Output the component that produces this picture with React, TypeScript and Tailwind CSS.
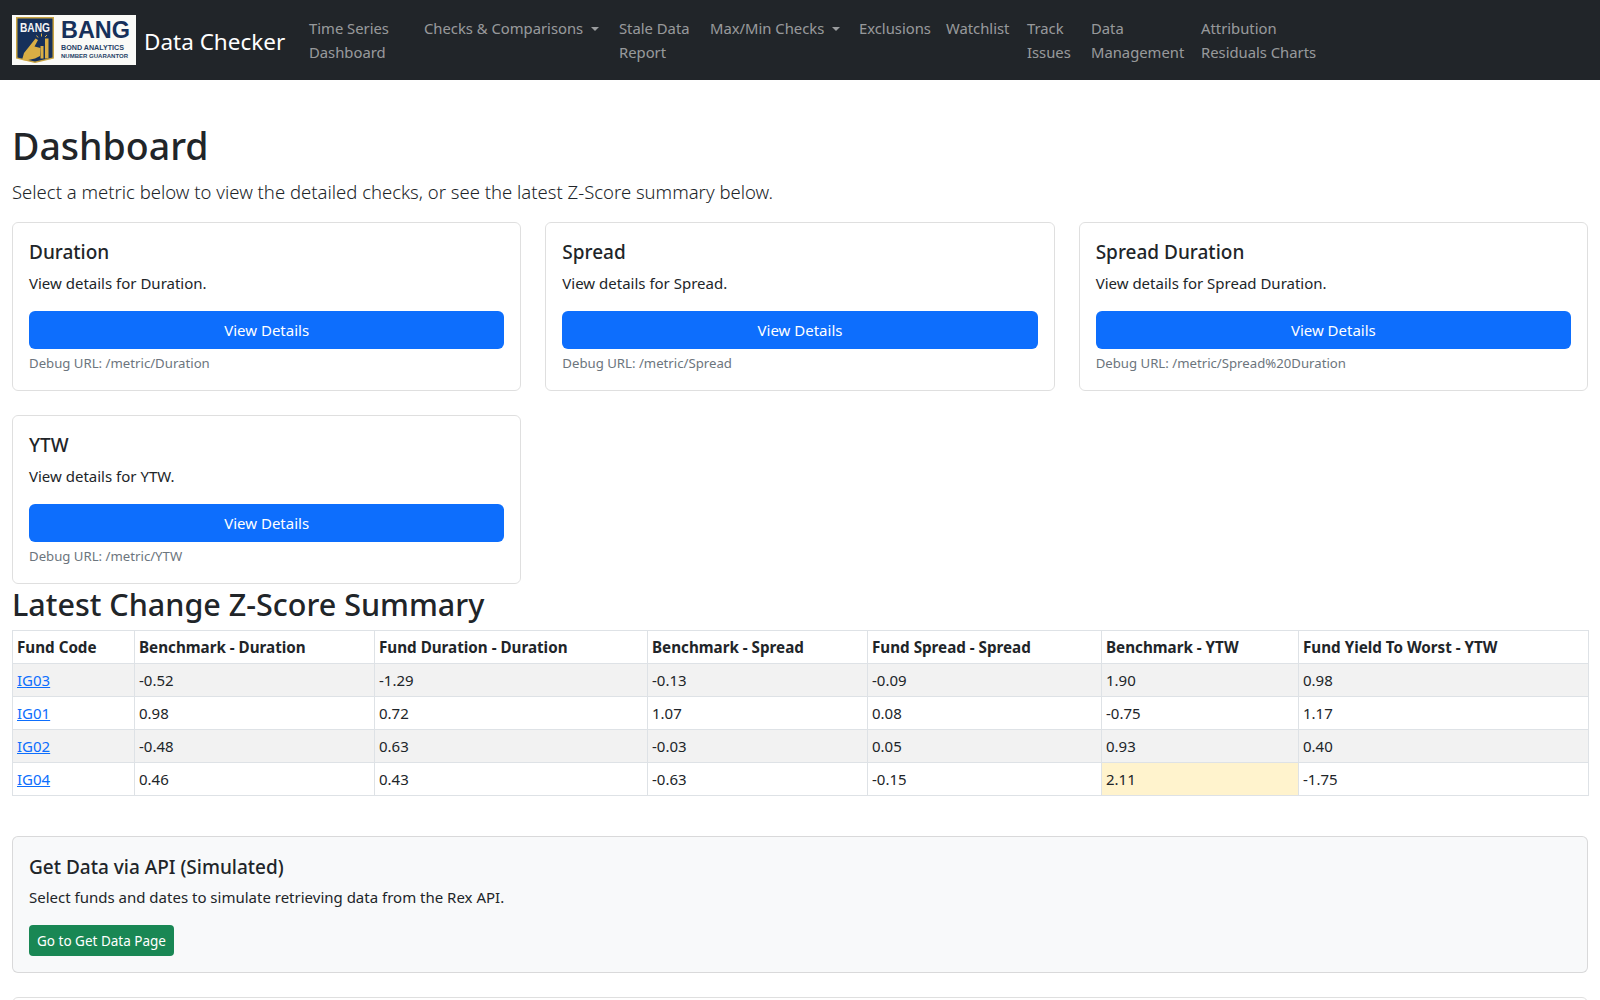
const metrics = [
  { name: 'Duration', url: '/metric/Duration' },
  { name: 'Spread', url: '/metric/Spread' },
  { name: 'Spread Duration', url: '/metric/Spread%20Duration' },
  { name: 'YTW', url: '/metric/YTW' },
];

const headers = [
  { label: 'Fund Code', width: 'w-[122px]' },
  { label: 'Benchmark - Duration', width: 'w-[240px]' },
  { label: 'Fund Duration - Duration', width: 'w-[273px]' },
  { label: 'Benchmark - Spread', width: 'w-[220px]' },
  { label: 'Fund Spread - Spread', width: 'w-[234px]' },
  { label: 'Benchmark - YTW', width: 'w-[197px]' },
  { label: 'Fund Yield To Worst - YTW', width: 'w-[290px]' },
];

const rows = [
  ['IG03', '-0.52', '-1.29', '-0.13', '-0.09', '1.90', '0.98'],
  ['IG01', '0.98', '0.72', '1.07', '0.08', '-0.75', '1.17'],
  ['IG02', '-0.48', '0.63', '-0.03', '0.05', '0.93', '0.40'],
  ['IG04', '0.46', '0.43', '-0.63', '-0.15', '2.11', '-1.75'],
];

function Logo() {
  return (
    <svg width="124" height="50" viewBox="0 0 124 50" className="shrink-0">
      <rect width="124" height="50" fill="#fafaf7" />
      <path d="M4 2h38v41.500l-19 4.500l-19-4.500z" fill="#c9a441" />
      <path d="M5.500 3.500h35v39l-17.500 4l-17.500-4z" fill="#16305a" />
      <text x="23" y="17" textAnchor="middle" fontFamily="Liberation Sans" fontWeight="700" fontSize="12" fill="#f4f4f4" textLength="30" lengthAdjust="spacingAndGlyphs">BANG</text>
      <path d="M10 45l2-7l4-5l7.500-9.500l2.500 1.500l-3.500 6.500l6 1.500l-0.500 8l-5 2.500l-9 2z" fill="#d9ae45" />
      <rect x="28.500" y="31" width="3" height="12.500" fill="#d9ae45" />
      <rect x="33" y="23.500" width="3.500" height="20" fill="#d9ae45" />
      <path d="M26 22.500l-1.500-2M29.500 21.500v-3M33 22l2-2" stroke="#d9ae45" strokeWidth="1" />
      <text x="49" y="22.500" fontFamily="Liberation Sans" fontWeight="700" fontSize="23" fill="#16305a" textLength="69" lengthAdjust="spacingAndGlyphs">BANG</text>
      <text x="49" y="35" fontFamily="Liberation Sans" fontWeight="700" fontSize="7" fill="#263f66" textLength="63" lengthAdjust="spacingAndGlyphs">BOND ANALYTICS</text>
      <text x="49" y="42.500" fontFamily="Liberation Sans" fontWeight="700" fontSize="6" fill="#263f66" textLength="67" lengthAdjust="spacingAndGlyphs">NUMBER GUARANTOR</text>
    </svg>
  );
}

function NavItem({ lines, caret, className }: { lines: string[]; caret?: boolean; className: string }) {
  return (
    <a href="#" className={`block self-start text-[#ffffff8c] leading-6 ${className}`}>
      {lines.map((line) => (
        <div key={line} className="flex items-center whitespace-nowrap">
          {line}
          {caret && <span className="ml-2 mt-0.5 border-x-[4.800px] border-t-[4.800px] border-x-transparent border-t-[#ffffff8c]" />}
        </div>
      ))}
    </a>
  );
}

function Navbar() {
  return (
    <nav className="flex h-20 items-center bg-[#212529] pl-3">
      <Logo />
      <a href="#" className="ml-2 w-[165px] shrink-0 pt-1 text-[22.500px] text-white">Data Checker</a>
      <div className="flex text-[14.800px]">
        <NavItem lines={['Time Series', 'Dashboard']} className="w-[115px]" />
        <NavItem lines={['Checks & Comparisons']} caret className="w-[195px]" />
        <NavItem lines={['Stale Data', 'Report']} className="w-[91px]" />
        <NavItem lines={['Max/Min Checks']} caret className="w-[149px]" />
        <NavItem lines={['Exclusions']} className="w-[87px]" />
        <NavItem lines={['Watchlist']} className="w-[81px]" />
        <NavItem lines={['Track', 'Issues']} className="w-[64px]" />
        <NavItem lines={['Data', 'Management']} className="w-[110px]" />
        <NavItem lines={['Attribution', 'Residuals Charts']} className="w-[130px]" />
      </div>
    </nav>
  );
}

function MetricCard({ name, url }: { name: string; url: string }) {
  return (
    <div className="rounded-md border border-[#00000020] p-4">
      <h5 className="mb-[7px] pt-px text-[19px] leading-6 font-medium">{name}</h5>
      <p className="mb-4 leading-6">View details for {name}.</p>
      <a href="#" className="block rounded-md bg-[#0d6efd] py-[7px] text-center leading-6 text-white">View Details</a>
      <p className="mt-1 text-[13.200px] leading-[21px] text-[#6c757d]">Debug URL: {url}</p>
    </div>
  );
}

export default function App() {
  return (
    <div className="min-h-[1000px] bg-white font-['Noto_Sans',sans-serif] text-[15px] text-[#212529]">
      <Navbar />
      <main className="px-3 pt-8">
        <h1 className="mb-[7px] mt-2.5 text-[37.500px] leading-[48px] font-medium">Dashboard</h1>
        <p className="mb-[15px] text-[18.500px] leading-[30px] font-light">
          Select a metric below to view the detailed checks, or see the latest Z-Score summary below.
        </p>
        <div className="grid grid-cols-3 gap-6">
          {metrics.map((m) => (
            <MetricCard key={m.name} name={m.name} url={m.url} />
          ))}
        </div>
        <h2 className="mb-[7px] mt-px text-[30.500px] leading-[38px] font-medium">Latest Change Z-Score Summary</h2>
        <table className="w-full table-fixed border-collapse border border-[#dee2e6] leading-6">
          <thead>
            <tr>
              {headers.map((h) => (
                <th key={h.label} className={`${h.width} border border-[#dee2e6] px-1 py-1 text-left text-[15.200px] font-bold`}>{h.label}</th>
              ))}
            </tr>
          </thead>
          <tbody>
            {rows.map((row, i) => (
              <tr key={row[0]} className={i % 2 === 0 ? 'bg-[#f2f2f2]' : ''}>
                {row.map((cell, j) => (
                  <td key={j} className={`border border-[#dee2e6] px-1 py-1 ${cell === '2.11' ? 'bg-[#fff3cd]' : ''}`}>
                    {j === 0 ? <a href="#" className="text-[#0d6efd] underline">{cell}</a> : cell}
                  </td>
                ))}
              </tr>
            ))}
          </tbody>
        </table>
        <section className="mt-10 rounded-md border border-[#00000020] bg-[#f8f9fa] p-4">
          <h5 className="mb-1.5 pt-0.5 text-[19px] leading-6 font-medium">Get Data via API (Simulated)</h5>
          <p className="mb-4 leading-6">Select funds and dates to simulate retrieving data from the Rex API.</p>
          <a href="#" className="inline-block rounded bg-[#198754] px-2 pb-1 pt-1.5 text-[13.500px] leading-[21px] text-white">Go to Get Data Page</a>
        </section>
        <section className="mt-6 h-20 rounded-md border border-[#00000020]" />
      </main>
    </div>
  );
}
